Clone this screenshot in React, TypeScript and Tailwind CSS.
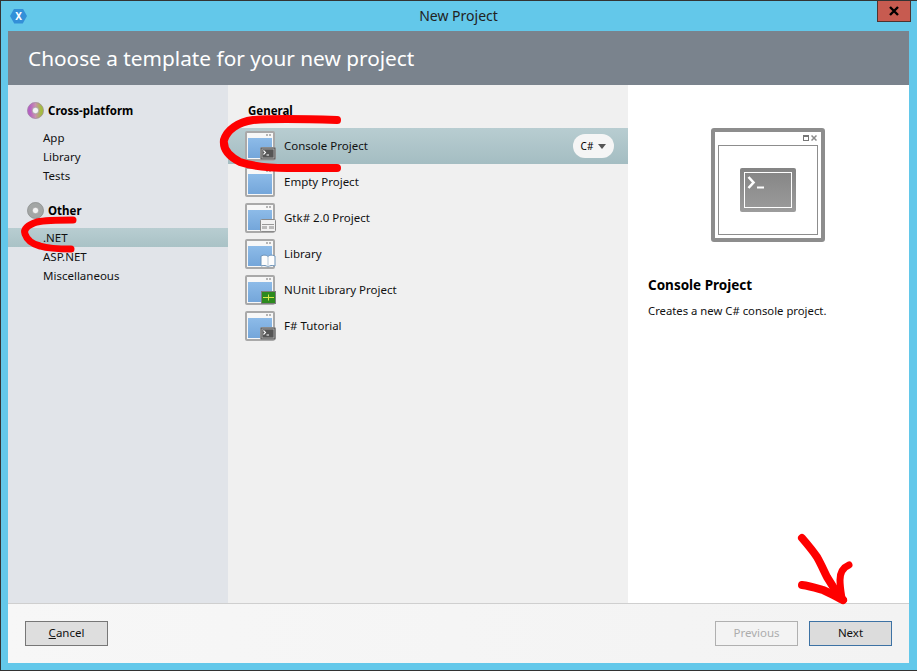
const font = "font-['Noto_Sans','Open_Sans',sans-serif]";

function RingIcon({ colored }: { colored?: boolean }) {
  return (
    <svg width="17" height="17" viewBox="0 0 17 17" className="shrink-0">
      <defs>
        <linearGradient id="ringColor" x1="0" y1="0.2" x2="1" y2="0.2">
          <stop offset="0" stopColor="#b560c4" />
          <stop offset="0.5" stopColor="#c893ad" />
          <stop offset="1" stopColor="#a3bd3e" />
        </linearGradient>
      </defs>
      <circle cx="8.5" cy="8.5" r="5.7" fill="#f2f2f2" stroke={colored ? "url(#ringColor)" : "#a3a6a5"} strokeWidth="5" />
      <circle cx="8.5" cy="8.5" r="8" fill="none" stroke={colored ? "#a08aa0" : "#8a8d8c"} strokeWidth="0.7" />
      <circle cx="8.5" cy="8.5" r="3.2" fill="none" stroke="#8f8f8f" strokeWidth="0.6" />
    </svg>
  );
}

function Badge({ kind }: { kind: string }) {
  if (kind === "console") {
    return (
      <svg width="16" height="13" viewBox="0 0 16 13">
        <rect x="0.5" y="0.5" width="15" height="12" rx="1" fill="#5c5c5c" stroke="#8a8a8a" />
        <rect x="2" y="2" width="12" height="9" fill="#555" stroke="#cfcfcf" strokeWidth="0.6" />
        <path d="M3.5 3.5 L5.5 5.5 L3.5 7.5" stroke="#fff" strokeWidth="1.1" fill="none" />
        <path d="M6.5 8 H9" stroke="#fff" />
      </svg>
    );
  }
  if (kind === "gtk") {
    return (
      <svg width="16" height="13" viewBox="0 0 16 13">
        <rect x="0.5" y="0.5" width="15" height="12" rx="1" fill="#f2f2f2" stroke="#8a8a8a" />
        <rect x="2" y="5" width="12" height="1" fill="#999" />
        <rect x="2" y="7" width="5" height="3" fill="#bbb" />
        <rect x="9" y="7" width="5" height="3" fill="#bbb" />
      </svg>
    );
  }
  if (kind === "book") {
    return (
      <svg width="16" height="14" viewBox="0 0 16 14">
        <path d="M1 2 C4 0.5 6.5 1 8 2.5 C9.5 1 12 0.5 15 2 V12 C12 11 9.5 11.5 8 13 C6.5 11.5 4 11 1 12 Z" fill="#fdfdfd" stroke="#6d93b8" />
        <path d="M8 2.5 V13" stroke="#b5c6d5" />
      </svg>
    );
  }
  return (
    <svg width="15" height="13" viewBox="0 0 15 13">
      <rect x="0.5" y="0.5" width="14" height="12" fill="#2c8a1e" stroke="#7c7c7c" />
      <path d="M2 6.5 H13" stroke="#d8e84a" strokeWidth="1" />
      <path d="M7.5 3.5 V9.5" stroke="#d8e84a" strokeWidth="1" />
    </svg>
  );
}

function ProjectIcon({ badge }: { badge?: string }) {
  return (
    <div className="relative h-[30px] w-[30px] shrink-0 rounded-[2px] border-2 border-[#a9a9a9] bg-[#f7f7f7]">
      <div className="absolute right-[2px] top-[1px] flex gap-[1px]">
        <div className="h-[2px] w-[2px] bg-[#b5b5b5]" />
        <div className="h-[2px] w-[2px] bg-[#b5b5b5]" />
      </div>
      <div className="absolute bottom-[1px] left-[1px] right-[1px] top-[5px] bg-gradient-to-b from-[#8dbbe8] to-[#74a6da]" />
      {badge && (
        <div className="absolute -bottom-[1px] -right-[3px]">
          <Badge kind={badge} />
        </div>
      )}
    </div>
  );
}

function Category({ label, colored, items, selected }: { label: string; colored?: boolean; items: string[]; selected?: string }) {
  return (
    <div>
      <div className="flex h-[17px] items-center gap-[4px] pl-[19px]">
        <RingIcon colored={colored} />
        <span className="text-[11.5px] font-bold text-black">{label}</span>
      </div>
      <div className="mt-[9px]">
        {items.map((item) => (
          <div
            key={item}
            className={
              "flex h-[19px] items-center pl-[35px] text-[11.5px] text-[#111] " +
              (item === selected ? "bg-gradient-to-b from-[#b8cdd1] to-[#a9c2c6]" : "")
            }
          >
            {item}
          </div>
        ))}
      </div>
    </div>
  );
}

const templates = [
  { name: "Console Project", badge: "console" },
  { name: "Empty Project" },
  { name: "Gtk# 2.0 Project", badge: "gtk" },
  { name: "Library", badge: "book" },
  { name: "NUnit Library Project", badge: "nunit" },
  { name: "F# Tutorial", badge: "console" },
];

export default function App() {
  return (
    <div className={"relative h-[671px] w-[917px] overflow-hidden border-b border-l border-t border-r-0 border-[#333] bg-[#63c8ea] " + font}>
      <div className="flex h-[30px] items-center">
        <div className="ml-[9px] flex h-[15px] w-[17px] items-center justify-center bg-[#3390d8] text-[10px] font-bold leading-none text-white [clip-path:polygon(25%_0,75%_0,100%_50%,75%_100%,25%_100%,0_50%)]">
          X
        </div>
        <div className="flex-1 pb-[1px] pr-[27px] text-center text-[14px] text-[#222]">New Project</div>
      </div>
      <div className="absolute right-[6px] top-0 flex h-[21px] w-[34px] items-center justify-center border-x border-b border-[#4d3330] bg-[#c75b50]">
        <svg width="10" height="10" viewBox="0 0 10 10" stroke="#000" strokeWidth="2.4">
          <path d="M1 1 L9 9 M9 1 L1 9" />
        </svg>
      </div>

      <div className="ml-[7px] flex h-[632px] w-[901px] flex-col">
        <div className="flex h-[54px] items-center bg-[#7a838d] pl-[20px] pt-[2px] text-[20.8px] text-white">
          Choose a template for your new project
        </div>

        <div className="flex h-[518px]">
          <div className="flex w-[220px] flex-col gap-[17px] bg-[#e1e4e9] pt-[17px]">
            <Category label="Cross-platform" colored items={["App", "Library", "Tests"]} />
            <Category label="Other" items={[".NET", "ASP.NET", "Miscellaneous"]} selected=".NET" />
          </div>

          <div className="w-[400px] bg-[#f0f0f0] pt-[17px]">
            <div className="h-[26px] pl-[20px] text-[11.5px] font-bold text-black">General</div>
            <div>
              {templates.map((t, i) => (
                <div
                  key={t.name}
                  className={
                    "flex h-[36px] items-center pl-[17px] pr-[14px] text-[11.5px] text-[#111] " +
                    (i === 0 ? "bg-gradient-to-b from-[#b8cdd1] to-[#a4bdc2]" : "")
                  }
                >
                  <ProjectIcon badge={t.badge} />
                  <span className="ml-[9px]">{t.name}</span>
                  {i === 0 && (
                    <div className="ml-auto flex h-[24px] w-[41px] items-center justify-center gap-[5px] rounded-full bg-[#f5f5f5] text-[10px] text-black">
                      C#
                      <div className="h-0 w-0 border-x-[4px] border-t-[5px] border-x-transparent border-t-[#555]" />
                    </div>
                  )}
                </div>
              ))}
            </div>
          </div>

          <div className="flex-1 bg-white pl-[20px]">
            <div className="ml-[63px] mt-[43px] h-[114px] w-[114px] rounded-[3px] border-[4px] border-[#8d8d8d] bg-white px-[3px] pb-[3px] pt-[13px]">
              <div className="relative flex h-[90px] items-center justify-center border border-[#8d8d8d]">
                <div className="absolute -top-[11px] right-[0px] flex items-center gap-[2px]">
                  <div className="h-[6px] w-[6px] border border-[#777] border-t-2" />
                  <svg width="6" height="6" viewBox="0 0 6 6" stroke="#8a8a8a" strokeWidth="1.5">
                    <path d="M0.5 0.5 L5.5 5.5 M5.5 0.5 L0.5 5.5" />
                  </svg>
                </div>
                <div className="h-[44px] w-[56px] rounded-[2px] bg-gradient-to-b from-[#848484] to-[#9c9c9c] p-[4px]">
                  <div className="h-full w-full border border-white">
                    <svg width="46" height="34" viewBox="0 0 46 34">
                      <path d="M3.5 4 L8.5 9.5 L3.5 15" stroke="#fff" strokeWidth="2.6" fill="none" />
                      <path d="M12 14.5 H19" stroke="#fff" strokeWidth="2" />
                    </svg>
                  </div>
                </div>
              </div>
            </div>
            <div className="mt-[33px] text-[13.5px] font-bold text-black">Console Project</div>
            <div className="mt-[8px] text-[11.3px] text-[#111]">Creates a new C# console project.</div>
          </div>
        </div>

        <div className="flex flex-1 items-center justify-between border-t border-[#cfcfcf] bg-gradient-to-r from-[#f7f7f7] to-[#f3f3f3] px-[17px] pb-[2px] pt-[1px] text-[11.5px]">
          <button className="h-[25px] w-[83px] border border-[#777] bg-[#dedede] text-[#111]">
            <span className="underline">C</span>ancel
          </button>
          <div className="flex gap-[11px]">
            <button className="h-[25px] w-[83px] border border-[#b0b0b0] bg-[#f3f3f3] text-[#adadad]">Previous</button>
            <button className="h-[25px] w-[83px] border border-[#3d72a4] bg-[#dcdcdc] text-[#111]">Next</button>
          </div>
        </div>
      </div>

      {/* red marker scribbles on top of the dialog */}
      <svg className="pointer-events-none absolute -left-[1px] -top-[1px]" width="917" height="671" viewBox="0 0 917 671" fill="none" stroke="#fe0000" strokeLinecap="round" strokeLinejoin="round">
        <path d="M73 220 C60 220 46 220 37 222 C28 225 23 229 25 234 C27 240 32 244 40 246 C50 249 60 249 71 249" strokeWidth="7" />
        <path d="M337 120 C310 119 275 118 253 120 C238 122 227 130 224 140 C223 148 228 156 240 162 C255 167 270 168 287 168 C305 168 325 168 337 168" strokeWidth="8" />
        <path d="M802 538 C808 545 813 551 817 557 C821 564 824 571 827 577 C832 586 838 594 843 600" strokeWidth="8" />
        <path d="M802 585 C810 586 816 588 823 590 C830 593 837 597 843 600" strokeWidth="8" />
        <path d="M849 565 C842 568 840 574 840 580 C840 587 841 592 842 598" strokeWidth="7" />
      </svg>
    </div>
  );
}
